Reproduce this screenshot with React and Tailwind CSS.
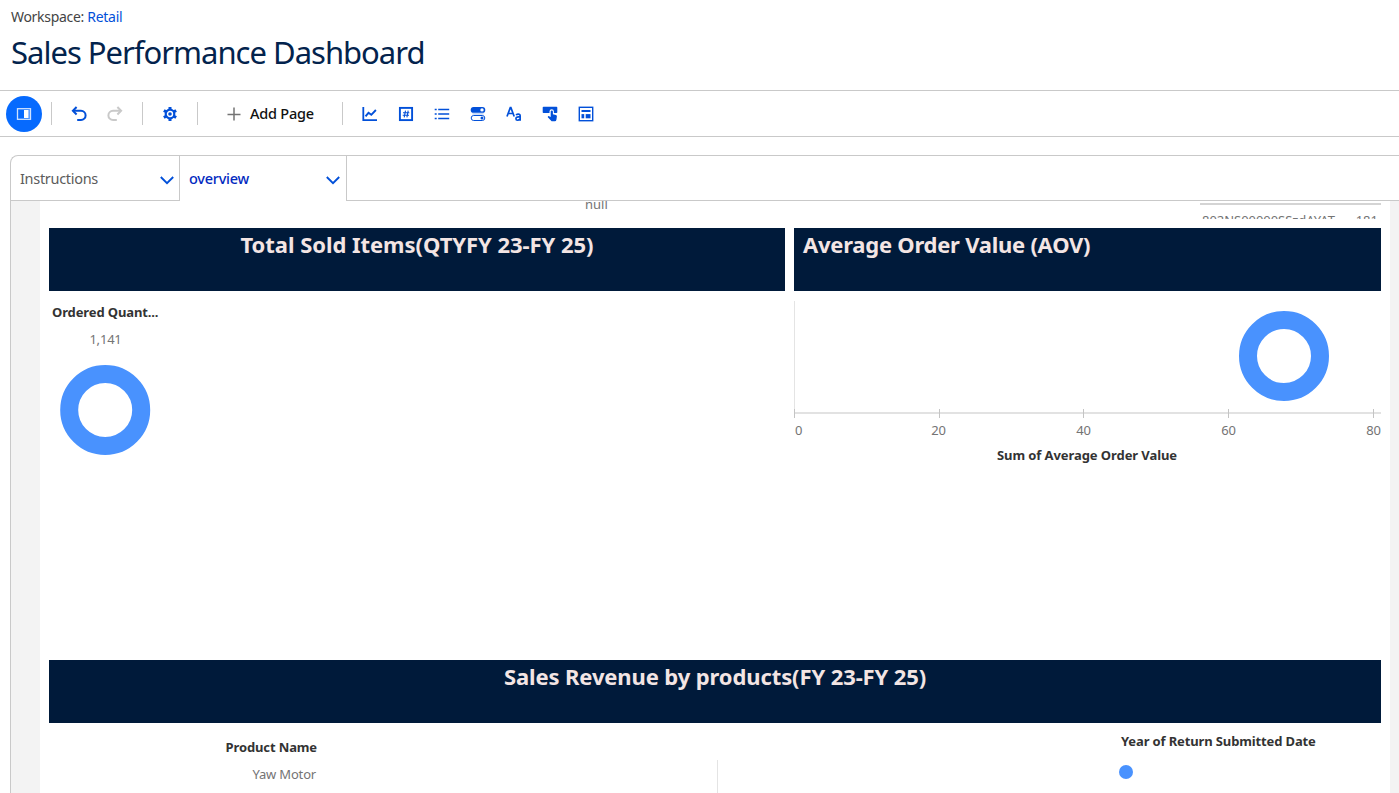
import React from "react";

const BLUE = "#0250d9";

function Divider({ className }) {
  return <div className={`h-[23px] w-px shrink-0 bg-[#c9c9c9] ${className}`} />;
}

function Icon({ children, className = "" }) {
  return (
    <button className={`flex h-9 w-9 shrink-0 items-center justify-center ${className}`}>
      <svg width="16" height="16" viewBox="0 0 16 16" fill="none" stroke={BLUE}>
        {children}
      </svg>
    </button>
  );
}

function Undo() {
  return (
    <>
      <path d="M5.6 1 1.900 4.800l3.700 3.700" strokeWidth="2" />
      <path d="M2 4.800h8a4.600 4.600 0 0 1 0 9.200H6.200" strokeWidth="2" />
    </>
  );
}

function Gear() {
  return (
    <>
      <circle cx="8" cy="8" r="4.300" strokeWidth="2.200" />
      <path d="M8 .9v2.600M8 12.500v2.600M1.850 4.450l2.250 1.300M11.900 10.250l2.250 1.300M1.850 11.550l2.250-1.300M11.900 5.750l2.250-1.300" strokeWidth="3" />
      <circle cx="8" cy="8" r="1.800" fill={BLUE} stroke="none" />
    </>
  );
}

function Toolbar() {
  return (
    <div className="flex h-[47px] items-center border-y border-[#c9c9c9] pl-1.5">
      <button className="flex h-9 w-9 shrink-0 items-center justify-center rounded-full bg-[#066afe]">
        <svg width="16" height="14" viewBox="0 0 16 14">
          <rect x="1.500" y="1.700" width="13" height="10.600" fill="none" stroke="#cfe2ff" strokeWidth="1.300" />
          <rect x="8" y="3" width="4" height="8" fill="#fff" />
          <rect x="12" y="3" width="1.500" height="8" fill="#9cc3ff" />
        </svg>
      </button>
      <Divider className="ml-[9px]" />
      <Icon className="ml-[9px]">
        <Undo />
      </Icon>
      <button className="flex h-9 w-9 shrink-0 items-center justify-center">
        <svg width="16" height="16" viewBox="0 0 16 16" fill="none" stroke="#c9c9c9" className="-scale-x-100">
          <Undo />
        </svg>
      </button>
      <Divider className="ml-[9px]" />
      <Icon className="ml-[9px]">
        <Gear />
      </Icon>
      <Divider className="ml-[9px]" />
      <button className="ml-[29px] flex shrink-0 items-center">
        <svg width="14" height="14" viewBox="0 0 14 14" fill="none" stroke="#747474" strokeWidth="1.500">
          <path d="M7 .5v13M.5 7.500h13" />
        </svg>
        <span className="-mt-0.5 ml-[9px] w-[92px] whitespace-nowrap text-left text-[14.500px] font-medium leading-5 tracking-[-0.22px] text-[#111]">
          Add Page
        </span>
      </button>
      <Divider />
      <Icon className="ml-[9px]">
        <path d="M1.300 1v13.200H15" strokeWidth="1.800" />
        <path d="M3.500 10.300 6.500 6.800l2.800 2 4.600-4.800" strokeWidth="1.900" />
      </Icon>
      <Icon>
        <rect x="1.900" y="1.900" width="12.200" height="12.200" strokeWidth="1.900" />
        <path d="M7.500 4.700 6.200 11.300M10.200 4.700 8.900 11.300M5 6.700h6.300M4.700 9.300H11" strokeWidth="1.100" />
      </Icon>
      <Icon>
        <path d="M.7 3.500h2M.7 8h2M.7 12.500h2M4.200 3.500h11M4.200 8h11M4.200 12.500h11" strokeWidth="1.700" />
      </Icon>
      <Icon>
        <rect x=".7" y="1" width="14.600" height="5.800" rx="2.900" fill={BLUE} stroke="none" />
        <circle cx="12" cy="3.900" r="1.700" fill="#fff" stroke="none" />
        <path d="M2.500 7.900h11" stroke="#b6cef6" strokeWidth="1.400" />
        <rect x="1.200" y="9.500" width="13.600" height="5" rx="2.500" strokeWidth="1" />
        <circle cx="12" cy="12" r="1.500" fill={BLUE} stroke="none" />
      </Icon>
      <Icon>
        <path d="M1 10.500 4.300 1.600h.6l3.300 8.900M2.200 7.500H7" strokeWidth="1.700" />
        <path
          d="M10 9q1-.9 2.300-.9 1.900 0 1.900 1.900v4.700M14.200 10.900h-1.600q-2.700 0-2.700 1.800 0 1.500 1.600 1.500 1.500 0 2.700-1.300"
          strokeWidth="1.600"
        />
      </Icon>
      <Icon>
        <path
          d="M1.500.8h13q.8 0 .8.8v4.700q0 .8-.8.8h-2.600V5.500a2.200 2.200 0 0 0-4.400 0v1.600h-6q-.8 0-.8-.8V1.600q0-.8.8-.8z"
          fill={BLUE}
          stroke="none"
        />
        <path
          d="M8.700 5.600a1.100 1.100 0 0 1 2.200 0V8.200l3 .9q1.100.3 1 1.400l-.5 3.200q-.2 1.500-1.600 1.500H9.600L5.800 11.300q-.3-1 .8-1.200l2.100.9z"
          fill={BLUE}
          stroke="none"
        />
      </Icon>
      <Icon>
        <rect x="1.300" y="1.300" width="13.400" height="13.400" strokeWidth="1.400" />
        <path d="M3.500 5h9" strokeWidth="2" />
        <path d="M3.500 10.200h2.700" strokeWidth="4.200" />
        <path d="M7.700 10.200h4.800" strokeWidth="4.200" />
      </Icon>
    </div>
  );
}

function Chevron() {
  return (
    <svg width="14" height="9" viewBox="0 0 14 9" fill="none" stroke={BLUE} strokeWidth="1.900">
      <path d="M.8 1 7 7.200 13.200 1" />
    </svg>
  );
}

function Tabs() {
  return (
    <div className="flex h-[45px] shrink-0 text-[14.500px] leading-5">
      <div className="flex w-[169px] shrink-0 items-center justify-between border-r border-b border-[#c9c9c9] pr-[5px] pl-[9px] text-[#5c5c5c]">
        <span className="tracking-[-0.3px]">Instructions</span>
        <div className="pt-[5px]">
          <Chevron />
        </div>
      </div>
      <div className="flex w-[167px] shrink-0 items-center justify-between border-r border-[#c9c9c9] pr-[6px] pl-[9px] font-medium text-[#022ac0]">
        <span className="-mt-px tracking-[-0.25px]">overview</span>
        <div className="pt-1">
          <Chevron />
        </div>
      </div>
      <div className="flex-1 border-b border-[#c9c9c9]" />
    </div>
  );
}

function Banner({ children, className }) {
  return (
    <div className={`h-[63px] shrink-0 overflow-hidden bg-[#001a3a] text-[22px] font-bold leading-[32px] whitespace-nowrap text-[#f3e5e4] ${className}`}>
      {children}
    </div>
  );
}

function Donut({ cx, cy }) {
  return <circle cx={cx} cy={cy} r="36" fill="none" stroke="#4992fe" strokeWidth="18" />;
}

function QuantityChart() {
  return (
    <div className="flex w-[736px] shrink-0 flex-col items-start">
      <div className="mt-[11px] ml-[3px] text-[13px] font-bold leading-5 tracking-[-0.12px] text-[#333]">
        Ordered Quant...
      </div>
      <div className="mt-[7px] w-[113px] text-center text-[13px] leading-5 tracking-[-0.2px] text-[#747474]">1,141</div>
      <svg className="mt-4 ml-[11px]" width="91" height="91" viewBox="0 0 91 91">
        <Donut cx="45.200" cy="45" />
      </svg>
    </div>
  );
}

function OrderValueChart() {
  const ticks = [
    [0.5, 4.5, "0"],
    [145.5, 144.5, "20"],
    [289.5, 289.5, "40"],
    [434.5, 434.5, "60"],
    [579.5, 579.5, "80"],
  ];
  return (
    <svg className="shrink-0" width="587" height="180" viewBox="0 0 587 180" fontSize="13" textAnchor="middle">
      <path d="M.5 10v112" stroke="#e4e4e4" />
      <path d="M0 122h587" stroke="#d9d9d9" strokeWidth="1.500" />
      {ticks.map(([x, tx, label]) => (
        <g key={label}>
          <path d={`M${x} 118v9`} stroke="#c4c4c4" />
          <text x={tx} y="144" fill="#747474" className="tracking-[-0.2px]">
            {label}
          </text>
        </g>
      ))}
      <Donut cx="490" cy="65" />
      <text x="293" y="169" fill="#333" fontWeight="700" className="tracking-[-0.08px]">
        Sum of Average Order Value
      </text>
    </svg>
  );
}

function Canvas() {
  return (
    <div className="flex min-h-0 flex-1 bg-[#f3f3f3] pr-[9px] pl-[29px]">
      <div className="flex flex-1 flex-col overflow-hidden bg-white pr-[9px] pl-[9px]">
        <div className="flex h-[27px] shrink-0 items-start justify-between">
          <div className="h-[18px] overflow-hidden pl-[536px] text-[13px] leading-5 text-[#747474]">
            <div className="-mt-[7px]">null</div>
          </div>
          <div className="mt-0.5 flex h-4 w-[181px] flex-col overflow-hidden border-t-2 border-[#d4d4d4]">
            <div className="mt-[5px] flex shrink-0 justify-between pr-[3px] pl-[2px] text-[13px] leading-5 text-[#747474]">
              <span className="tracking-[-0.04px]">802NS00000SSzdAYAT</span>
              <span>181</span>
            </div>
          </div>
        </div>
        <div className="flex shrink-0 gap-[9px]">
          <Banner className="w-[736px] text-center tracking-[-0.04px]">Total Sold Items(QTYFY 23-FY 25)</Banner>
          <Banner className="flex-1 pl-[9px] tracking-[-0.25px]">Average Order Value (AOV)</Banner>
        </div>
        <div className="flex h-[369px] shrink-0 gap-[9px]">
          <QuantityChart />
          <OrderValueChart />
        </div>
        <Banner className="text-center tracking-[-0.11px]">Sales Revenue by products(FY 23-FY 25)</Banner>
        <div className="flex shrink-0 text-[13px] leading-5">
          <div className="flex w-[268px] flex-col items-end pt-[14px]">
            <div className="font-bold tracking-[-0.13px] text-[#333]">Product Name</div>
            <div className="mt-[7px] pr-px tracking-[-0.18px] text-[#747474]">Yaw Motor</div>
          </div>
          <div className="mt-[37px] ml-[400px] h-[33px] w-px bg-[#e4e4e4]" />
          <div className="ml-[403px] pt-2">
            <div className="font-bold tracking-[-0.13px] whitespace-nowrap text-[#333]">Year of Return Submitted Date</div>
            <div className="mt-[14px] -ml-0.5 h-3.5 w-3.5 rounded-full bg-[#4992fe]" />
          </div>
        </div>
      </div>
    </div>
  );
}

export default function App() {
  return (
    <div className="flex h-[793px] w-[1399px] flex-col overflow-hidden bg-white font-['Noto_Sans','Open_Sans',sans-serif]">
      <header className="h-[90px] shrink-0 pl-[11px]">
        <div className="pt-[7px] text-[14px] leading-5 tracking-[-0.3px] text-[#444]">
          Workspace: <a className="text-[#0250d9]">Retail</a>
        </div>
        <h1 className="mt-[3px] text-[31px] leading-[44px] tracking-[-1px] whitespace-nowrap text-[#03234d]">
          Sales Performance Dashboard
        </h1>
      </header>
      <Toolbar />
      <main className="mt-[18px] ml-[10px] flex min-h-0 flex-1 flex-col overflow-hidden rounded-tl-[8px] border-t border-l border-[#c9c9c9]">
        <Tabs />
        <Canvas />
      </main>
    </div>
  );
}
